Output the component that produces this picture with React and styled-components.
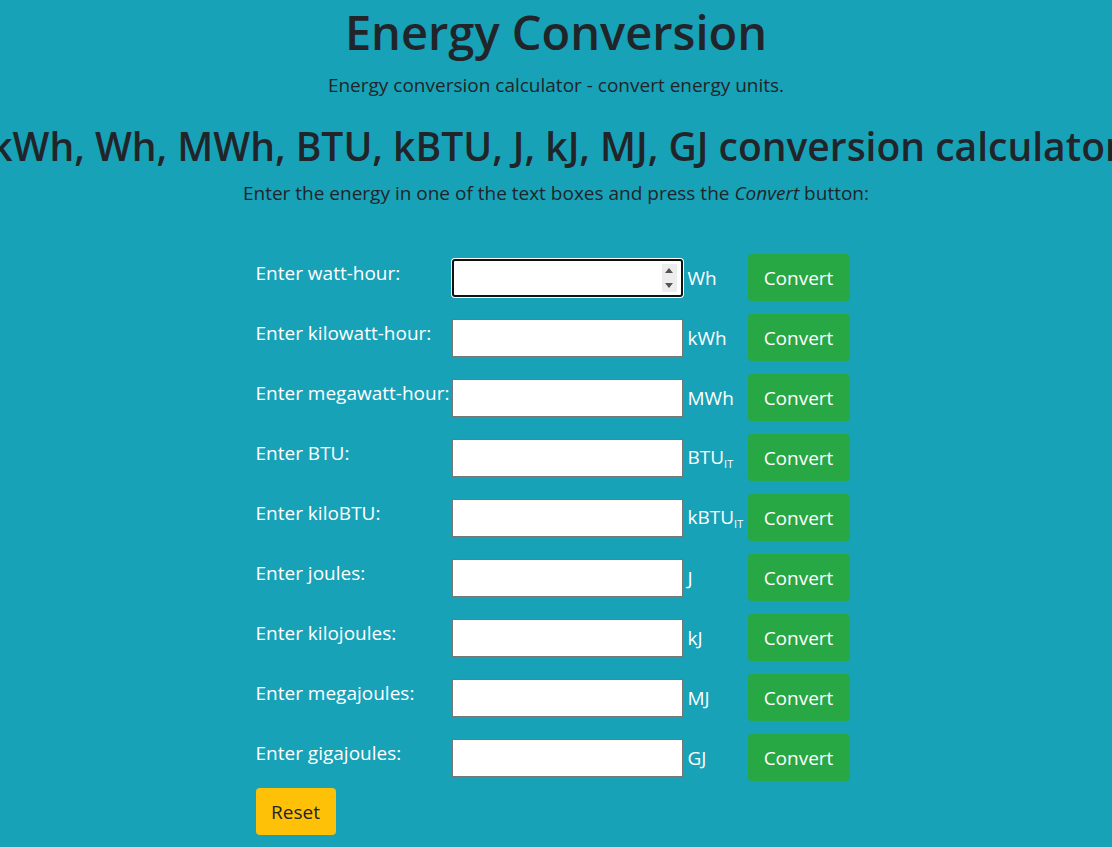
import React from "react"
import styled, { createGlobalStyle } from "styled-components"

const GlobalStyle = createGlobalStyle`
  html, body {
    margin: 0;
    padding: 0;
    background-color: #17a2b8;
    overflow: hidden;
  }
  body {
    font-family: "Open Sans", "Noto Sans", sans-serif;
    color: #212529;
  }
`

const Page = styled.div`
  width: 1112px;
  height: 847px;
  display: flex;
  flex-direction: column;
  align-items: center;
  overflow: hidden;
`

const Title = styled.h1`
  margin: 3px 0 0 0;
  font-size: 47px;
  font-weight: 600;
  line-height: 58px;
  white-space: nowrap;
`

const Lead = styled.p`
  margin: 11px 0 0 0;
  font-size: 19px;
  line-height: 26px;
  white-space: nowrap;
`

const SubTitle = styled.h2`
  margin: 23px 0 0 0;
  font-size: 39px;
  font-weight: 600;
  line-height: 50px;
  white-space: nowrap;
`

const Intro = styled.p`
  margin: 9px 0 0 0;
  font-size: 19px;
  line-height: 26px;
  white-space: nowrap;
  em { font-style: italic; }
`

const Form = styled.div`
  margin-top: 48px;
  margin-left: -7px;
  display: flex;
  flex-direction: column;
  gap: 13px;
`

const Row = styled.div`
  display: grid;
  grid-template-columns: 196px 236px 60px 102px;
  align-items: center;
  height: 47px;
`

const Label = styled.label`
  align-self: start;
  padding-top: 6px;
  font-size: 19px;
  line-height: 26px;
  color: #fff;
  white-space: nowrap;
`

const InputWrap = styled.div`
  position: relative;
  width: 231px;
  height: 38px;
`

const Input = styled.input`
  box-sizing: border-box;
  width: 100%;
  height: 100%;
  margin: 0;
  background: #fff;
  border: ${p => (p.$focused ? "2px solid #111" : "1px solid #767676")};
  border-radius: ${p => (p.$focused ? "3px" : "0")};
  box-shadow: ${p => (p.$focused ? "0 0 0 1px #fff" : "none")};
  outline: none;
  font-size: 16px;
  padding: 0 6px;
  -moz-appearance: textfield;
  &::-webkit-inner-spin-button,
  &::-webkit-outer-spin-button {
    -webkit-appearance: none;
    margin: 0;
  }
`

const Spinner = styled.div`
  position: absolute;
  right: 6px;
  top: 5px;
  width: 15px;
  height: 28px;
  background: #ededed;
  display: flex;
  flex-direction: column;
  align-items: center;
  justify-content: space-around;
`

const Unit = styled.span`
  font-size: 19px;
  color: #fff;
  white-space: nowrap;
  sub {
    font-size: 11px;
    vertical-align: -4px;
  }
`

const Button = styled.button`
  box-sizing: border-box;
  height: 47px;
  border: none;
  border-radius: 4px;
  font-family: inherit;
  font-size: 19px;
  padding: 0 12px;
  cursor: pointer;
  background: ${p => (p.$variant === "warning" ? "#ffc107" : "#28a745")};
  color: ${p => (p.$variant === "warning" ? "#212529" : "#fff")};
`

const ResetButton = styled(Button)`
  width: 80px;
  margin-top: -6px;
  align-self: flex-start;
`

const rows = [
  { label: "Enter watt-hour:", unit: "Wh" },
  { label: "Enter kilowatt-hour:", unit: "kWh" },
  { label: "Enter megawatt-hour:", unit: "MWh" },
  { label: "Enter BTU:", unit: "BTU", sub: "IT" },
  { label: "Enter kiloBTU:", unit: "kBTU", sub: "IT" },
  { label: "Enter joules:", unit: "J" },
  { label: "Enter kilojoules:", unit: "kJ" },
  { label: "Enter megajoules:", unit: "MJ" },
  { label: "Enter gigajoules:", unit: "GJ" },
]

const SpinArrows = () => (
  <Spinner>
    <svg width="8" height="6" viewBox="0 0 8 6">
      <path d="M0 5 L4 0 L8 5 Z" fill="#555" />
    </svg>
    <svg width="8" height="6" viewBox="0 0 8 6">
      <path d="M0 1 L4 6 L8 1 Z" fill="#555" />
    </svg>
  </Spinner>
)

const App = () => {
  return (
    <>
      <GlobalStyle />
      <Page>
        <Title>Energy Conversion</Title>
        <Lead>Energy conversion calculator - convert energy units.</Lead>
        <SubTitle>kWh, Wh, MWh, BTU, kBTU, J, kJ, MJ, GJ conversion calculator</SubTitle>
        <Intro>
          Enter the energy in one of the text boxes and press the <em>Convert</em> button:
        </Intro>
        <Form>
          {rows.map((r, i) => (
            <Row key={r.unit}>
              <Label>{r.label}</Label>
              <InputWrap>
                <Input type="number" $focused={i === 0} />
                {i === 0 ? <SpinArrows /> : null}
              </InputWrap>
              <Unit>
                {r.unit}
                {r.sub ? <sub>{r.sub}</sub> : null}
              </Unit>
              <Button>Convert</Button>
            </Row>
          ))}
          <ResetButton $variant="warning">Reset</ResetButton>
        </Form>
      </Page>
    </>
  )
}

export default App
